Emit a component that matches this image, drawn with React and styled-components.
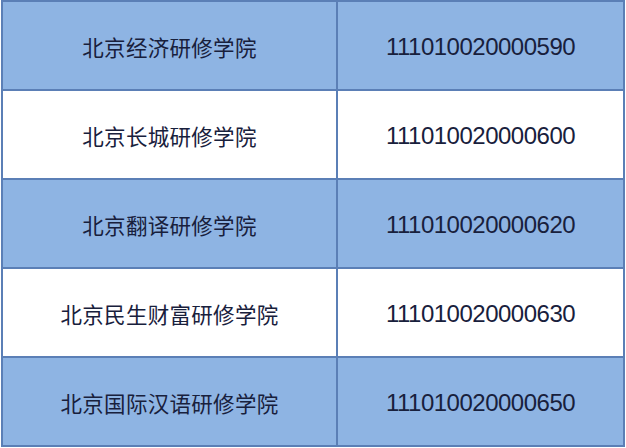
import React from 'react';
import styled, { createGlobalStyle } from 'styled-components';

const GlobalStyle = createGlobalStyle`
    html, body {
        margin: 0;
        padding: 0;
        background: #ffffff;
    }
`;

const StyledTable = styled.div`
    width: 624px;
    margin-left: 1px;
    border: 2px solid #5b7fb6;
    box-sizing: border-box;
    display: flex;
    flex-direction: column;
`;

const StyledRow = styled.div`
    display: grid;
    grid-template-columns: 333px 1fr;
    height: 87px;
    background: ${({ $shaded }) => ($shaded ? '#8eb4e3' : '#ffffff')};
    & + & {
        border-top: 2px solid #5b7fb6;
    }
`;

const StyledCell = styled.div`
    display: flex;
    align-items: center;
    justify-content: center;
    padding-top: 2px;
    color: #18203c;
    & + & {
        border-left: 2px solid #5b7fb6;
    }
`;

const StyledName = styled(StyledCell)`
    font-family: "Noto Sans CJK SC", "Noto Sans", sans-serif;
    font-size: 21.5px;
    letter-spacing: 0.3px;
`;

const StyledCode = styled(StyledCell)`
    font-family: "Liberation Sans", Arial, sans-serif;
    font-size: 24px;
    letter-spacing: -0.5px;
`;

const schools = [
    { name: '北京经济研修学院', code: '111010020000590' },
    { name: '北京长城研修学院', code: '111010020000600' },
    { name: '北京翻译研修学院', code: '111010020000620' },
    { name: '北京民生财富研修学院', code: '111010020000630' },
    { name: '北京国际汉语研修学院', code: '111010020000650' },
];

const App = () => (
    <>
        <GlobalStyle />
        <StyledTable>
            {schools.map((school, idx) => (
                <StyledRow key={school.code} $shaded={idx % 2 === 0}>
                    <StyledName>{school.name}</StyledName>
                    <StyledCode>{school.code}</StyledCode>
                </StyledRow>
            ))}
        </StyledTable>
    </>
);

export default App;
